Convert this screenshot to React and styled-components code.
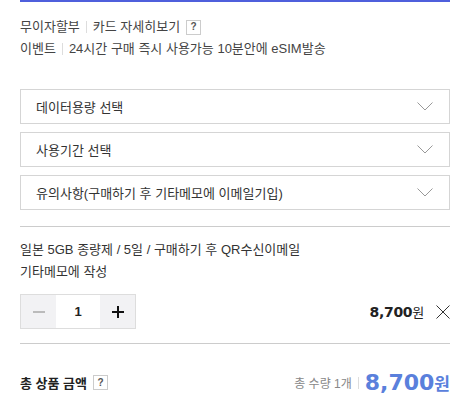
import React, { useState } from 'react';
import styled, { createGlobalStyle } from 'styled-components';

const GlobalStyle = createGlobalStyle`
  body {
    margin: 0;
    background: #fff;
    font-family: "Liberation Sans", "Noto Sans CJK KR", sans-serif;
    color: #333;
  }
`;

const Wrap = styled.div`
  width: 430px;
  padding: 0 16px 0 20px;
`;

const TopLine = styled.div`
  height: 2px;
  background: #4f5fdc;
`;

const InfoBlock = styled.div`
  padding: 17px 0 14px;
  display: flex;
  flex-direction: column;
  gap: 6px;
`;

const InfoRow = styled.div`
  display: flex;
  align-items: center;
  font-size: 13px;
  line-height: 16px;
  color: #444;
`;

const Sep = styled.span`
  width: 1px;
  height: 12px;
  background: #ddd;
  margin: 0 6px;
`;

const Help = styled.span`
  display: inline-flex;
  align-items: center;
  justify-content: center;
  width: 13px;
  height: 13px;
  border: 1px solid #ccc;
  font-size: 10px;
  font-weight: bold;
  color: #555;
  margin-left: 6px;
  line-height: 1;
`;

const Selects = styled.div`
  display: flex;
  flex-direction: column;
  gap: 8px;
  padding: 18px 0 16px;
  border-bottom: 1px solid #ccc;
`;

const SelectBox = styled.div`
  height: 33px;
  border: 1px solid #d5d5d5;
  display: flex;
  align-items: center;
  justify-content: space-between;
  padding: 0 16px 0 15px;
  font-size: 13px;
  color: #333;
`;

const OptionBlock = styled.div`
  padding: 12px 0 14px;
  border-bottom: 1px solid #ccc;
`;

const OptionName = styled.div`
  font-size: 13px;
  line-height: 22px;
  color: #333;
`;

const QtyRow = styled.div`
  display: flex;
  align-items: center;
  justify-content: space-between;
  margin-top: 11px;
`;

const Stepper = styled.div`
  display: flex;
  border: 1px solid #ddd;
  height: 33px;
`;

const StepBtn = styled.button`
  width: 35px;
  border: none;
  background: #f2f2f4;
  display: flex;
  align-items: center;
  justify-content: center;
  padding: 0;
  cursor: pointer;
`;

const QtyValue = styled.div`
  width: 44px;
  display: flex;
  align-items: center;
  justify-content: center;
  font-size: 13px;
  font-weight: bold;
  color: #222;
`;

const PriceRight = styled.div`
  display: flex;
  align-items: center;
  gap: 12px;
`;

const Price = styled.span`
  font-size: 14px;
  font-weight: bold;
  color: #222;
  font-family: "DejaVu Sans", "Noto Sans CJK KR", sans-serif;
  letter-spacing: -0.3px;
  small {
    font-size: 13px;
    font-weight: normal;
    font-family: "Liberation Sans", "Noto Sans CJK KR", sans-serif;
  }
`;

const TotalRow = styled.div`
  display: flex;
  align-items: center;
  justify-content: space-between;
  padding: 26px 0 0;
`;

const TotalLabel = styled.div`
  display: flex;
  align-items: center;
  font-size: 13px;
  font-weight: bold;
  color: #222;
`;

const TotalRight = styled.div`
  display: flex;
  align-items: center;
  font-size: 12px;
  color: #888;
`;

const TotalPrice = styled.span`
  font-size: 22px;
  font-weight: bold;
  color: #5a80dc;
  font-family: "DejaVu Sans", "Noto Sans CJK KR", sans-serif;
  small {
    font-size: 17px;
    font-family: "Liberation Sans", "Noto Sans CJK KR", sans-serif;
  }
`;

const Chevron = () => (
  <svg width="16" height="9" viewBox="0 0 16 9" fill="none">
    <path d="M0.5 0.5 L8 8 L15.5 0.5" stroke="#999" strokeWidth="1" />
  </svg>
);

const selects = ['데이터용량 선택', '사용기간 선택', '유의사항(구매하기 후 기타메모에 이메일기입)'];

export default function App() {
  const [qty, setQty] = useState(1);
  return (
    <Wrap>
      <GlobalStyle />
      <TopLine />
      <InfoBlock>
        <InfoRow>
          무이자할부<Sep />카드 자세히보기<Help>?</Help>
        </InfoRow>
        <InfoRow>
          이벤트<Sep />24시간 구매 즉시 사용가능 10분안에 eSIM발송
        </InfoRow>
      </InfoBlock>
      <Selects>
        {selects.map((s) => (
          <SelectBox key={s}>
            {s}
            <Chevron />
          </SelectBox>
        ))}
      </Selects>
      <OptionBlock>
        <OptionName>
          일본 5GB 종량제 / 5일 / 구매하기 후 QR수신이메일
          <br />
          기타메모에 작성
        </OptionName>
        <QtyRow>
          <Stepper>
            <StepBtn onClick={() => setQty(Math.max(1, qty - 1))}>
              <svg width="12" height="2" viewBox="0 0 12 2">
                <rect width="12" height="2" fill="#bbb" />
              </svg>
            </StepBtn>
            <QtyValue>{qty}</QtyValue>
            <StepBtn onClick={() => setQty(qty + 1)}>
              <svg width="12" height="12" viewBox="0 0 12 12">
                <rect x="0" y="5" width="12" height="2" fill="#111" />
                <rect x="5" y="0" width="2" height="12" fill="#111" />
              </svg>
            </StepBtn>
          </Stepper>
          <PriceRight>
            <Price>
              8,700<small>원</small>
            </Price>
            <svg width="14" height="14" viewBox="0 0 14 14">
              <path d="M0.5 0.5 L13.5 13.5 M13.5 0.5 L0.5 13.5" stroke="#333" strokeWidth="1" />
            </svg>
          </PriceRight>
        </QtyRow>
      </OptionBlock>
      <TotalRow>
        <TotalLabel>
          총 상품 금액<Help>?</Help>
        </TotalLabel>
        <TotalRight>
          총 수량 1개<Sep />
          <TotalPrice>
            8,700<small>원</small>
          </TotalPrice>
        </TotalRight>
      </TotalRow>
    </Wrap>
  );
}
